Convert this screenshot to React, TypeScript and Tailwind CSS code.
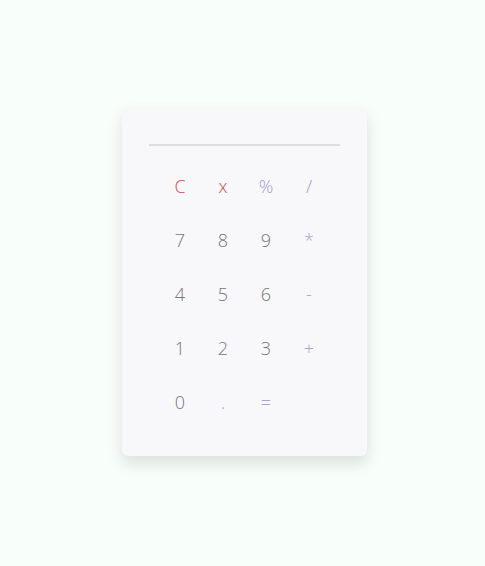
import { useState } from 'react';

type Key = { label: string; color: string };

const keys: Key[] = [
  { label: 'C', color: 'text-[#cc4b47]' },
  { label: 'x', color: 'text-[#cc4b47]' },
  { label: '%', color: 'text-[#9c9ccf]' },
  { label: '/', color: 'text-[#9a9cc0]' },
  { label: '7', color: 'text-[#767676]' },
  { label: '8', color: 'text-[#767676]' },
  { label: '9', color: 'text-[#767676]' },
  { label: '*', color: 'text-[#a4a4cc]' },
  { label: '4', color: 'text-[#767676]' },
  { label: '5', color: 'text-[#767676]' },
  { label: '6', color: 'text-[#767676]' },
  { label: '-', color: 'text-[#a4a4cc]' },
  { label: '1', color: 'text-[#767676]' },
  { label: '2', color: 'text-[#767676]' },
  { label: '3', color: 'text-[#767676]' },
  { label: '+', color: 'text-[#a4a4cc]' },
  { label: '0', color: 'text-[#767676]' },
  { label: '.', color: 'text-[#a4a4cc]' },
  { label: '=', color: 'text-[#a4a4cc]' },
];

export default function App() {
  const [display, setDisplay] = useState('');

  const press = (k: string) => {
    if (k === 'C') return setDisplay('');
    if (k === 'x') return setDisplay((d) => d.slice(0, -1));
    if (k === '=') {
      try {
        // eslint-disable-next-line no-new-func
        setDisplay(String(Function(`return (${display})`)()));
      } catch {
        setDisplay('');
      }
      return;
    }
    setDisplay((d) => d + k);
  };

  return (
    <div className="min-h-screen bg-[#f8fffa] pt-[107px] font-['Open_Sans',sans-serif]">
      <div className="ml-[122px] w-[245px] rounded-md bg-[#f8f8fb] px-[27px] pt-[27px] pb-[27px] shadow-[0_8px_16px_rgba(0,0,0,0.12)]">
        <div className="h-[12px] border-b-2 border-[#dddde2] text-right text-lg leading-none font-light text-[#767676] overflow-hidden">
          {display}
        </div>
        <div className="mt-[13px] grid grid-cols-[repeat(4,43px)] justify-center">
          {keys.map((k) => (
            <button
              key={k.label}
              onClick={() => press(k.label)}
              className={`h-[54px] text-[18px] font-light ${k.color}`}
            >
              {k.label}
            </button>
          ))}
        </div>
      </div>
    </div>
  );
}
